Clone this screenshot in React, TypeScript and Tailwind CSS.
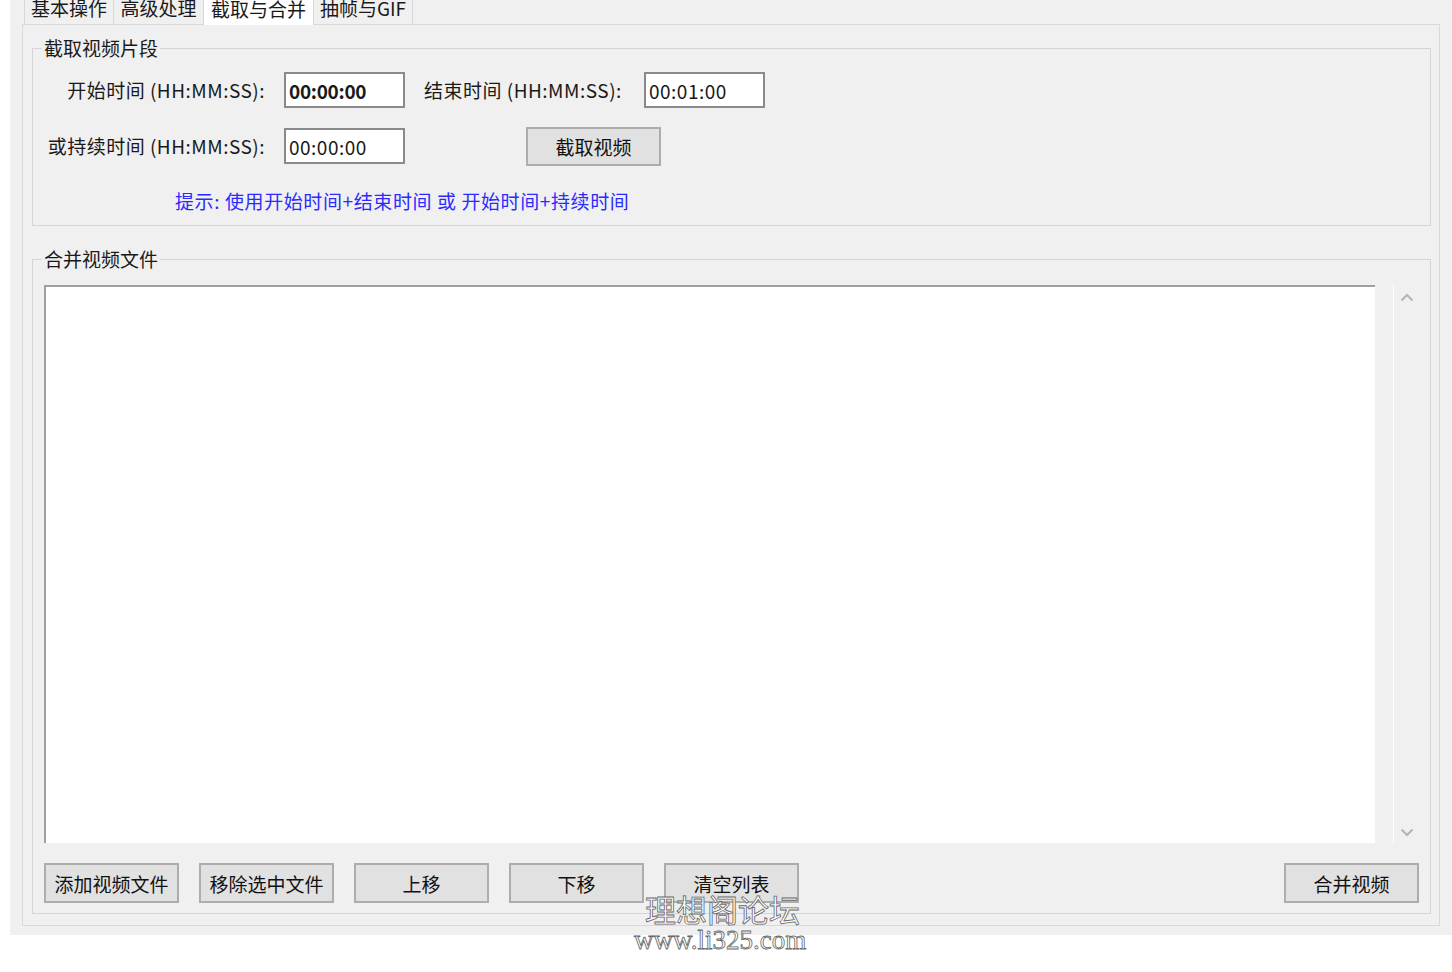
const tabs = [
  { label: "基本操作", w: "w-[89px]", active: false },
  { label: "高级处理", w: "w-[90px]", active: false },
  { label: "截取与合并", w: "w-[110px]", active: true },
  { label: "抽帧与GIF", w: "w-[100px]", active: false },
];

function TimeBox({ value, bold }: { value: string; bold?: boolean }) {
  return (
    <div
      className={
        "w-[121px] h-[36px] bg-white border-2 border-[#8a8a8a] pl-[3px] flex items-center leading-none " +
        (bold ? "font-semibold tracking-[-0.3px]" : "tracking-[0.5px]")
      }
    >
      {value}
    </div>
  );
}

function Btn({ children }: { children: string }) {
  return (
    <button className="w-[135px] h-[40px] bg-[#e1e1e1] border-2 border-[#adadad] text-[19px] leading-none text-[#111]">
      {children}
    </button>
  );
}

export default function App() {
  return (
    <div className="relative w-[1452px] h-[972px] overflow-hidden bg-white text-[19px] text-[#1a1a1a] font-['Noto_Sans_CJK_SC','Microsoft_YaHei',sans-serif]">
      {/* 窗口 */}
      <div className="ml-[10px] h-[935px] bg-[#f0f0f0] pl-[12px] pr-[12px] flex flex-col">
        {/* 标签页 */}
        <div className="flex items-end h-[24px] pl-[2px]">
          {tabs.map((t, i) => (
            <div
              key={t.label}
              className={
                "flex items-center justify-center border-t border-l border-[#d9d9d9] leading-none " +
                t.w +
                (i === tabs.length - 1 ? " border-r" : "") +
                (t.active ? " h-[35px] -mb-px bg-white relative z-10" : " h-[34px] bg-[#f0f0f0]")
              }
            >
              {t.label}
            </div>
          ))}
        </div>

        {/* 标签页内容 */}
        <div className="flex-1 border border-[#d9d9d9] bg-[#f0f0f0] mb-[9px] pl-[9px] pr-[8px] pt-[12px] flex flex-col">
          {/* 截取视频片段 */}
          <fieldset className="m-0 min-w-0 border border-[#d5d5d5] px-[11px] pt-[13px] pb-[13px]">
            <legend className="-ml-[2px] px-[2px] leading-[22px]">截取视频片段</legend>

            <div className="flex items-center h-[36px]">
              <div className="w-[221px] text-right tracking-[0.5px]">开始时间 (HH:MM:SS):</div>
              <div className="ml-[19px]">
                <TimeBox value="00:00:00" bold />
              </div>
              <div className="ml-[19px] w-[201px] tracking-[0.5px]">结束时间 (HH:MM:SS):</div>
              <div className="ml-[19px]">
                <TimeBox value="00:01:00" />
              </div>
            </div>

            <div className="flex items-center h-[36px] mt-[20px]">
              <div className="w-[221px] text-right tracking-[0.5px]">或持续时间 (HH:MM:SS):</div>
              <div className="ml-[19px]">
                <TimeBox value="00:00:00" />
              </div>
              <button className="ml-[121px] w-[135px] h-[39px] bg-[#e1e1e1] border-2 border-[#adadad] leading-none text-[#111]">
                截取视频
              </button>
            </div>

            <div className="mt-[26px] h-[22px] leading-[22px] pl-[131px] text-[#2b2bff] tracking-[0.6px]">
              提示: 使用开始时间+结束时间 或 开始时间+持续时间
            </div>
          </fieldset>

          {/* 合并视频文件 */}
          <fieldset className="m-0 mt-[22px] min-w-0 border border-[#d5d5d5] px-[11px] pt-[15px] pb-[10px]">
            <legend className="-ml-[2px] px-[2px] leading-[22px]">合并视频文件</legend>

            <div className="flex h-[558px]">
              <div className="w-[1331px] bg-white border-t-2 border-l-2 border-[#a0a0a0]" />
              <div className="ml-[18px] flex-1 border-l border-white flex flex-col items-center justify-between pt-[8px] pb-[6px]">
                <svg width="14" height="9" viewBox="0 0 14 9">
                  <polyline points="1.5,7.5 7,2 12.5,7.5" fill="none" stroke="#b4b4b4" strokeWidth="2" />
                </svg>
                <svg width="14" height="9" viewBox="0 0 14 9">
                  <polyline points="1.5,1.5 7,7 12.5,1.5" fill="none" stroke="#b4b4b4" strokeWidth="2" />
                </svg>
              </div>
            </div>

            <div className="flex gap-[20px] mt-[20px]">
              <Btn>添加视频文件</Btn>
              <Btn>移除选中文件</Btn>
              <Btn>上移</Btn>
              <Btn>下移</Btn>
              <Btn>清空列表</Btn>
              <div className="ml-auto">
                <Btn>合并视频</Btn>
              </div>
            </div>
          </fieldset>
        </div>
      </div>

      {/* 水印 */}
      <div className="absolute left-[645px] top-[893px] text-[31px] leading-none text-white [-webkit-text-stroke:0.8px_#666] font-['Noto_Sans_CJK_SC',sans-serif]">
        理想阁论坛
      </div>
      <div className="absolute left-[634px] top-[927px] text-[27px] leading-none text-white [-webkit-text-stroke:0.8px_#666] font-['Liberation_Serif',serif]">
        www.li325.com
      </div>
    </div>
  );
}
